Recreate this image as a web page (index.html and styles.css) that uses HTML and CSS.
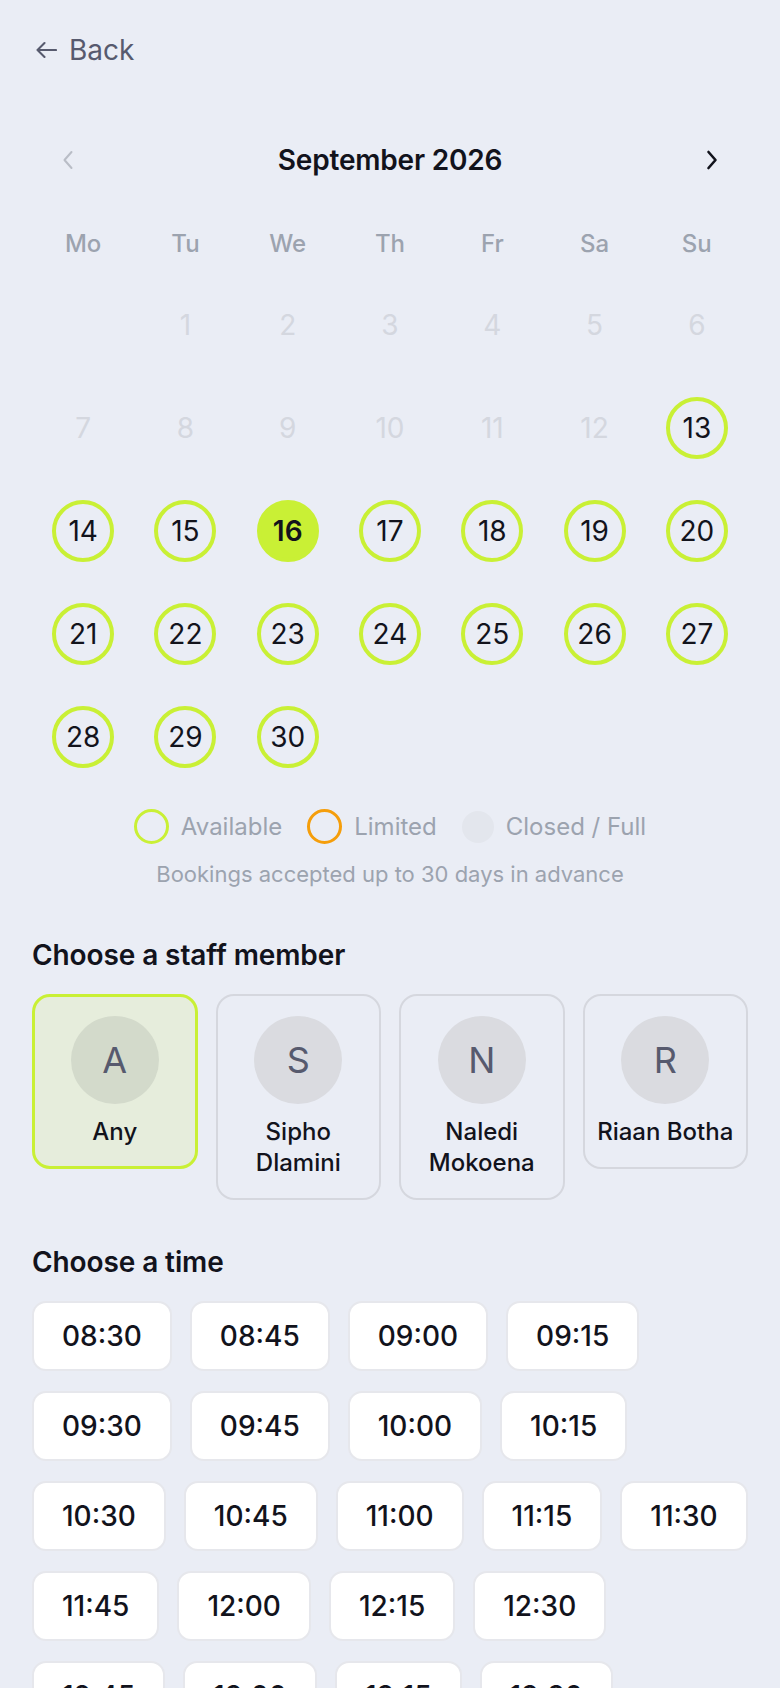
FILE: index.html
```html
<!DOCTYPE html>
<html lang="en">
<head>
<meta charset="utf-8">
<meta name="viewport" content="width=device-width, initial-scale=1">
<title>Book an appointment</title>
<link rel="stylesheet" href="styles.css">
</head>
<body>
<main class="page">
  <a class="back" href="#">
    <svg class="back-icon" width="22" height="18" viewBox="0 0 22 18" aria-hidden="true"><path d="M21 9H2.5M9.5 2 2.5 9l7 7" fill="none" stroke="currentColor" stroke-width="2.1" stroke-linecap="round" stroke-linejoin="round"/></svg>
    <span>Back</span>
  </a>

  <section class="calendar">
    <div class="cal-head">
      <button class="nav nav-prev" aria-label="Previous month">
        <svg width="12" height="20" viewBox="0 0 12 20"><path d="M9.5 2 2.5 10l7 8" fill="none" stroke="currentColor" stroke-width="2" stroke-linecap="round" stroke-linejoin="round"/></svg>
      </button>
      <div class="month">September 2026</div>
      <button class="nav nav-next" aria-label="Next month">
        <svg width="12" height="20" viewBox="0 0 12 20"><path d="M2.5 2l7 8-7 8" fill="none" stroke="currentColor" stroke-width="2.6" stroke-linecap="round" stroke-linejoin="round"/></svg>
      </button>
    </div>

    <div class="weekdays">
      <span>Mo</span><span>Tu</span><span>We</span><span>Th</span><span>Fr</span><span>Sa</span><span>Su</span>
    </div>

    <div class="days">
      <div class="day empty"></div>
      <div class="day off"><span class="num">1</span></div>
      <div class="day off"><span class="num">2</span></div>
      <div class="day off"><span class="num">3</span></div>
      <div class="day off"><span class="num">4</span></div>
      <div class="day off"><span class="num">5</span></div>
      <div class="day off"><span class="num">6</span></div>
      <div class="day off"><span class="num">7</span></div>
      <div class="day off"><span class="num">8</span></div>
      <div class="day off"><span class="num">9</span></div>
      <div class="day off"><span class="num">10</span></div>
      <div class="day off"><span class="num">11</span></div>
      <div class="day off"><span class="num">12</span></div>
      <div class="day avail"><span class="num">13</span></div>
      <div class="day avail"><span class="num">14</span></div>
      <div class="day avail"><span class="num">15</span></div>
      <div class="day avail selected"><span class="num">16</span></div>
      <div class="day avail"><span class="num">17</span></div>
      <div class="day avail"><span class="num">18</span></div>
      <div class="day avail"><span class="num">19</span></div>
      <div class="day avail"><span class="num">20</span></div>
      <div class="day avail"><span class="num">21</span></div>
      <div class="day avail"><span class="num">22</span></div>
      <div class="day avail"><span class="num">23</span></div>
      <div class="day avail"><span class="num">24</span></div>
      <div class="day avail"><span class="num">25</span></div>
      <div class="day avail"><span class="num">26</span></div>
      <div class="day avail"><span class="num">27</span></div>
      <div class="day avail"><span class="num">28</span></div>
      <div class="day avail"><span class="num">29</span></div>
      <div class="day avail"><span class="num">30</span></div>
    </div>

    <div class="legend">
      <div class="legend-item"><span class="dot dot-avail"></span>Available</div>
      <div class="legend-item"><span class="dot dot-limited"></span>Limited</div>
      <div class="legend-item"><span class="dot dot-closed"></span>Closed / Full</div>
    </div>
    <p class="note">Bookings accepted up to 30 days in advance</p>
  </section>

  <section class="staff-section">
    <h2 class="section-title">Choose a staff member</h2>
    <div class="staff">
      <button class="card selected"><span class="avatar">A</span><span class="name">Any</span></button>
      <button class="card"><span class="avatar">S</span><span class="name">Sipho Dlamini</span></button>
      <button class="card"><span class="avatar">N</span><span class="name">Naledi Mokoena</span></button>
      <button class="card"><span class="avatar">R</span><span class="name">Riaan Botha</span></button>
    </div>
  </section>

  <section class="time-section">
    <h2 class="section-title title-time">Choose a time</h2>
    <div class="times">
      <button class="slot">08:30</button>
      <button class="slot">08:45</button>
      <button class="slot">09:00</button>
      <button class="slot">09:15</button>
      <button class="slot">09:30</button>
      <button class="slot">09:45</button>
      <button class="slot">10:00</button>
      <button class="slot">10:15</button>
      <button class="slot">10:30</button>
      <button class="slot">10:45</button>
      <button class="slot">11:00</button>
      <button class="slot">11:15</button>
      <button class="slot">11:30</button>
      <button class="slot">11:45</button>
      <button class="slot">12:00</button>
      <button class="slot">12:15</button>
      <button class="slot">12:30</button>
      <button class="slot">12:45</button>
      <button class="slot">13:00</button>
      <button class="slot">13:15</button>
      <button class="slot">13:30</button>
      <button class="slot">13:45</button>
      <button class="slot">14:00</button>
      <button class="slot">14:15</button>
      <button class="slot">14:30</button>
    </div>
  </section>
</main>
</body>
</html>
```

FILE: styles.css
```css
* { box-sizing: border-box; }

body {
  margin: 0;
  background: #eaedf5;
  font-family: Inter, "Noto Sans", "Liberation Sans", sans-serif;
  color: #12131c;
}

.page {
  padding: 33px 32px 40px;
}

.back {
  display: inline-flex;
  align-items: center;
  gap: 12px;
  padding-left: 3px;
  height: 34px;
  font-size: 28px;
  line-height: 34px;
  color: #575a6e;
  text-decoration: none;
}

.back-icon { display: block; }

/* calendar */
.cal-head {
  margin-top: 71px;
  height: 44px;
  display: flex;
  align-items: center;
  justify-content: space-between;
  padding: 0 16px;
}

.nav {
  width: 40px;
  height: 44px;
  display: flex;
  align-items: center;
  justify-content: center;
  border: 0;
  background: none;
  padding: 0;
  cursor: pointer;
}

.nav svg { display: block; }
.nav-prev { color: #b9bdc6; }
.nav-next { color: #12131c; }

.month {
  font-size: 28px;
  font-weight: 600;
  letter-spacing: -0.2px;
}

.weekdays {
  margin-top: 41px;
  height: 40px;
  display: grid;
  grid-template-columns: repeat(7, 1fr);
  align-items: center;
  text-align: center;
  font-size: 24px;
  font-weight: 500;
  color: #9ca3af;
}

.days {
  margin-top: 10px;
  display: grid;
  grid-template-columns: repeat(7, 1fr);
  grid-auto-rows: 103px;
}

.day {
  display: flex;
  align-items: center;
  justify-content: center;
  font-size: 28px;
  font-weight: 400;
}

.num {
  width: 62px;
  height: 62px;
  border-radius: 50%;
  display: flex;
  align-items: center;
  justify-content: center;
}

.day.off { color: #d4d7df; }

.day.avail .num {
  border: 4px solid #c9f035;
  color: #12131c;
}

.day.selected .num {
  background: #c9f035;
  font-weight: 600;
}

/* legend */
.legend {
  margin-top: 21px;
  height: 35px;
  display: flex;
  justify-content: center;
  align-items: center;
  gap: 25px;
  font-size: 24px;
  color: #9ca3af;
}

.legend-item {
  display: flex;
  align-items: center;
  gap: 12px;
}

.dot {
  width: 35px;
  height: 35px;
  border-radius: 50%;
}

.dot-avail { border: 3.5px solid #c9f035; }
.dot-limited { border: 3.5px solid #f59e0b; }
.dot-closed { width: 32px; height: 32px; background: #e3e6ed; }

.note {
  margin: 15px 0 0;
  text-align: center;
  font-size: 22px;
  line-height: 31px;
  color: #9ca3af;
}

/* sections */
.section-title {
  margin: 48px 0 0;
  font-size: 28px;
  font-weight: 600;
  line-height: 34px;
  letter-spacing: -0.1px;
  color: #12131c;
}

.staff {
  margin-top: 22px;
  display: grid;
  grid-template-columns: repeat(4, 1fr);
  gap: 18px;
  align-items: start;
}

.card {
  display: flex;
  flex-direction: column;
  align-items: center;
  gap: 12px;
  padding: 20px 8px;
  border: 2px solid #d5d7de;
  border-radius: 18px;
  background: transparent;
  font-family: inherit;
  font-size: 24px;
  font-weight: 500;
  line-height: 31px;
  color: #12131c;
  text-align: center;
  cursor: pointer;
}

.card.selected {
  border: 3px solid #c9f035;
  background: #e6eddc;
  padding: 19px 7px;
}

.avatar {
  width: 88px;
  height: 88px;
  border-radius: 50%;
  background: #dadbe0;
  display: flex;
  align-items: center;
  justify-content: center;
  font-size: 36px;
  font-weight: 400;
  color: #575a6e;
}

.card.selected .avatar { background: #d3dacb; }

.title-time { margin-top: 45px; }

.times {
  margin-top: 22px;
  display: flex;
  flex-wrap: wrap;
  gap: 20px 18px;
}

.slot {
  padding: 16px 28px;
  border: 2px solid #e6e7ec;
  border-radius: 14px;
  background: #fff;
  font-family: inherit;
  font-size: 28px;
  font-weight: 500;
  line-height: 34px;
  color: #12131c;
  cursor: pointer;
}
```
